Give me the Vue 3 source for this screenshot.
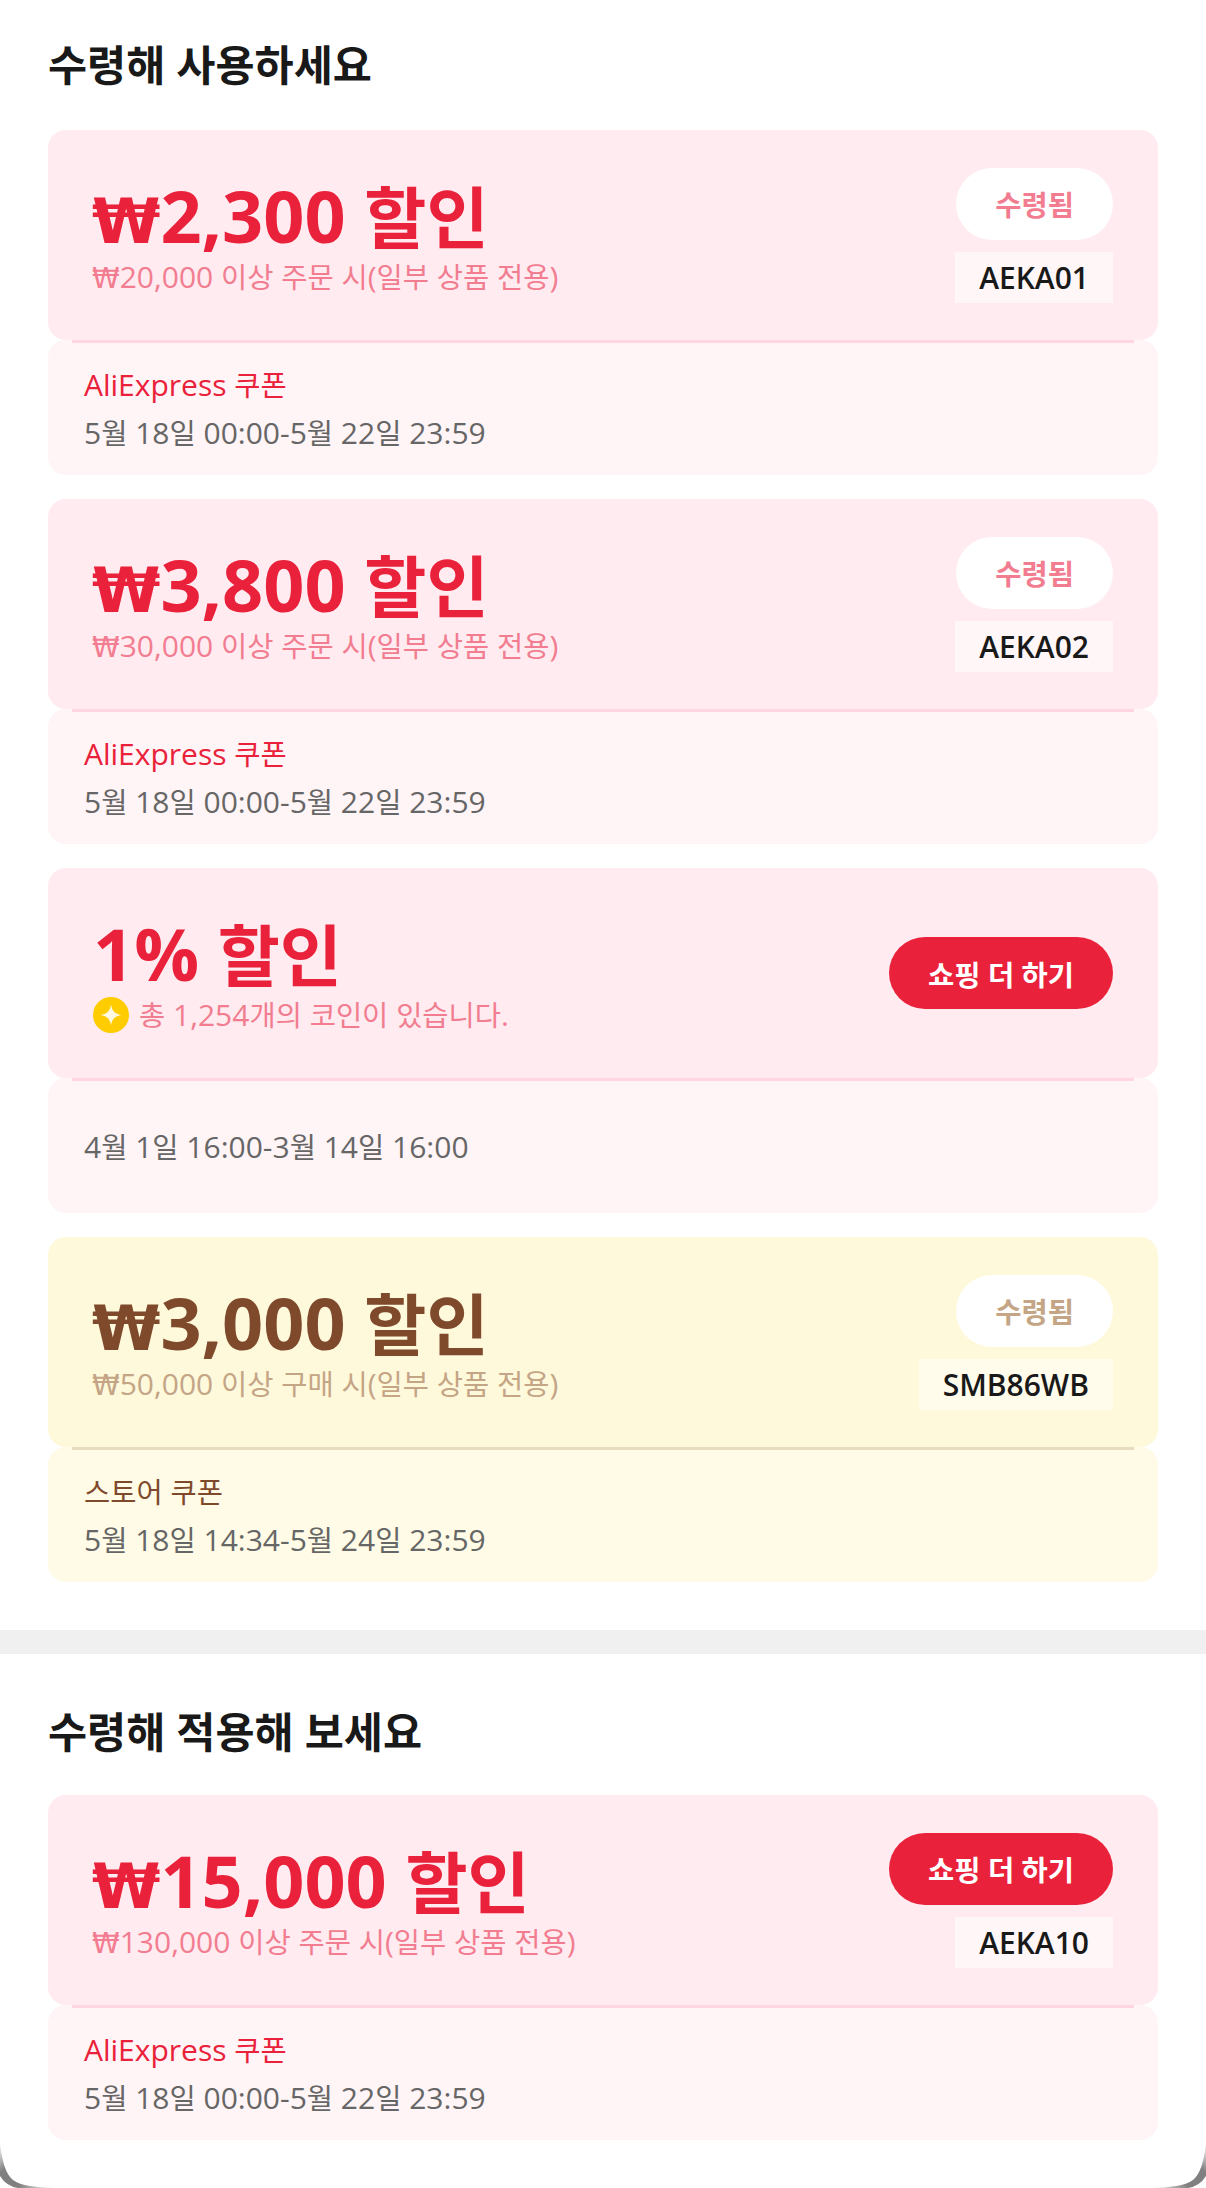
<template>
  <div class="page">
    <section class="panel">
      <h2 class="title">수령해 사용하세요</h2>
      <div class="list">
        <div v-for="c in claimed" :key="c.id" class="coupon" :class="c.theme">
          <div class="top">
            <div class="info">
              <div class="amount">
                <span v-for="(r, i) in runs(c.amount)" :key="i" :class="r.cls">{{ r.text }}</span>
              </div>
              <div class="cond">
                <span v-if="c.coin" class="coin">
                  <svg viewBox="0 0 36 36" width="36" height="36">
                    <circle cx="18" cy="18" r="18" fill="#ffcc00" />
                    <path d="M18 7.5C19 14 22 17 28.5 18C22 19 19 22 18 28.5C17 22 14 19 7.5 18C14 17 17 14 18 7.5Z" fill="#fff8e0" />
                  </svg>
                </span>
                <span>
                  <span v-for="(r, i) in runs(c.cond)" :key="i" :class="r.cls">{{ r.text }}</span>
                </span>
              </div>
            </div>
            <div class="side">
              <button class="btn" :class="{ done: c.done }">{{ c.btn }}</button>
              <div v-if="c.code" class="code">{{ c.code }}</div>
            </div>
          </div>
          <div class="bottom">
            <div v-if="c.source" class="source">
              <span v-for="(r, i) in runs(c.source)" :key="i" :class="r.cls">{{ r.text }}</span>
            </div>
            <div class="date">
              <span v-for="(r, i) in runs(c.date)" :key="i" :class="r.cls">{{ r.text }}</span>
            </div>
          </div>
        </div>
      </div>
    </section>
    <div class="divider"></div>
    <section class="panel second">
      <h2 class="title">수령해 적용해 보세요</h2>
      <div class="list">
        <div v-for="c in apply" :key="c.id" class="coupon" :class="c.theme">
          <div class="top">
            <div class="info">
              <div class="amount">
                <span v-for="(r, i) in runs(c.amount)" :key="i" :class="r.cls">{{ r.text }}</span>
              </div>
              <div class="cond">
                <span>
                  <span v-for="(r, i) in runs(c.cond)" :key="i" :class="r.cls">{{ r.text }}</span>
                </span>
              </div>
            </div>
            <div class="side">
              <button class="btn">{{ c.btn }}</button>
              <div class="code">{{ c.code }}</div>
            </div>
          </div>
          <div class="bottom">
            <div class="source">
              <span v-for="(r, i) in runs(c.source)" :key="i" :class="r.cls">{{ r.text }}</span>
            </div>
            <div class="date">
              <span v-for="(r, i) in runs(c.date)" :key="i" :class="r.cls">{{ r.text }}</span>
            </div>
          </div>
        </div>
      </div>
    </section>

    <!-- rounded screen corners, they sit over the page -->
    <svg v-for="side in ['left', 'right']" :key="side" class="corner" :class="side" viewBox="0 0 60 60" width="60" height="60">
      <defs>
        <linearGradient :id="'fade-' + side" x1="0" y1="0.1" x2="1" y2="1">
          <stop offset="0" stop-color="#808080" stop-opacity="0" />
          <stop offset="0.3" stop-color="#808080" />
          <stop offset="0.6" stop-color="#808080" />
          <stop offset="1" stop-color="#808080" stop-opacity="0" />
        </linearGradient>
      </defs>
      <path d="M0 10C1 33 6 46 13 52C21 58 35 59.5 58 60L18 60Q6 58 0 48Z" :fill="'url(#fade-' + side + ')'" />
    </svg>
  </div>
</template>

<script setup>
const claimed = [
  { id: 1, theme: 'red', amount: '₩2,300 할인', cond: '₩20,000 이상 주문 시(일부 상품 전용)', btn: '수령됨', done: true, code: 'AEKA01', source: 'AliExpress 쿠폰', date: '5월 18일 00:00-5월 22일 23:59' },
  { id: 2, theme: 'red', amount: '₩3,800 할인', cond: '₩30,000 이상 주문 시(일부 상품 전용)', btn: '수령됨', done: true, code: 'AEKA02', source: 'AliExpress 쿠폰', date: '5월 18일 00:00-5월 22일 23:59' },
  { id: 3, theme: 'red', amount: '1% 할인', cond: '총 1,254개의 코인이 있습니다.', coin: true, btn: '쇼핑 더 하기', date: '4월 1일 16:00-3월 14일 16:00' },
  { id: 4, theme: 'yellow', amount: '₩3,000 할인', cond: '₩50,000 이상 구매 시(일부 상품 전용)', btn: '수령됨', done: true, code: 'SMB86WB', source: '스토어 쿠폰', date: '5월 18일 14:34-5월 24일 23:59' }
]

const apply = [
  { id: 5, theme: 'red', amount: '₩15,000 할인', cond: '₩130,000 이상 주문 시(일부 상품 전용)', btn: '쇼핑 더 하기', code: 'AEKA10', source: 'AliExpress 쿠폰', date: '5월 18일 00:00-5월 22일 23:59' }
]

// hangul and the won sign need other sizes than the latin digits next to them
const runs = (text) =>
  text.match(/[가-힣]+|₩|[^가-힣₩]+/g).map((part) => ({
    text: part,
    cls: part === '₩' ? 'won' : /[가-힣]/.test(part) ? 'ko' : ''
  }))
</script>

<style scoped>
.page {
  width: 1206px;
  height: 2188px;
  overflow: hidden;
  background: #fff;
  font-family: "Open Sans", "Noto Sans CJK KR", sans-serif;
  position: relative;
}

.panel {
  padding: 0 48px;
  height: 1630px;
  box-sizing: border-box;
}

.second {
  height: 534px;
}

.divider {
  height: 24px;
  background: #f0f0f0;
}

.title {
  margin: 0;
  height: 130px;
  line-height: 130px;
  font-size: 42.5px;
  font-weight: 700;
  color: #191919;
}

.second .title {
  height: 141px;
  padding-top: 16px;
  box-sizing: border-box;
  line-height: 124px;
}

.list {
  display: flex;
  flex-direction: column;
  gap: 24px;
}

.coupon {
  display: flex;
  flex-direction: column;
}

.top {
  height: 210px;
  box-sizing: border-box;
  border-radius: 18px;
  padding: 0 45px;
  display: flex;
  justify-content: space-between;
  align-items: center;
  position: relative;
}

.top::after {
  content: "";
  position: absolute;
  left: 24px;
  right: 24px;
  bottom: -3px;
  height: 3px;
}

.bottom {
  height: 135px;
  box-sizing: border-box;
  border-radius: 18px;
  padding: 3px 36px 0;
  display: flex;
  flex-direction: column;
  justify-content: center;
  gap: 8px;
}

.ko {
  font-size: 0.95em;
  line-height: 0;
}

.amount {
  font-size: 72px;
  font-weight: 700;
  line-height: 78px;
  margin-bottom: 5px;
  white-space: nowrap;
}

.amount .ko {
  font-size: 67.5px;
}

.won {
  font-family: "DejaVu Sans", sans-serif;
  font-size: 28px;
  line-height: 0;
  margin-left: -1px;
}

.amount .won {
  font-size: 62px;
}

.cond {
  font-size: 30px;
  line-height: 36px;
  display: flex;
  align-items: center;
  white-space: nowrap;
}

.coin {
  width: 36px;
  height: 36px;
  margin-right: 10px;
  display: inline-flex;
}

.side {
  display: flex;
  flex-direction: column;
  align-items: flex-end;
  gap: 12px;
}

.btn {
  height: 72px;
  padding: 0 39px;
  border: none;
  border-radius: 36px;
  font-family: inherit;
  font-size: 28.5px;
  font-weight: 600;
  background: #ea213a;
  color: #fff;
}

.code {
  height: 51px;
  line-height: 51px;
  padding: 0 24px;
  font-size: 30px;
  font-weight: 600;
  color: #191919;
}

.source {
  font-size: 30px;
  line-height: 40px;
}

.date {
  font-size: 30px;
  line-height: 40px;
  color: #666;
}

.corner {
  position: absolute;
  bottom: 0;
}

.corner.left {
  left: 0;
}

.corner.right {
  right: 0;
  transform: scaleX(-1);
}

.red .top { background: #ffebf0; }
.red .top::after { background: #ffd6e2; }
.red .bottom { background: #fff4f6; }
.red .amount, .red .source { color: #ea213a; }
.red .cond { color: #f27d90; }
.red .btn.done { background: #fff; color: #f27d90; }
.red .code { background: #fff6f8; }

.yellow .top { background: #fff9dc; }
.yellow .top::after { background: #e8dcc0; }
.yellow .bottom { background: #fffbe6; }
.yellow .amount, .yellow .source { color: #7f4a2c; }
.yellow .cond { color: #c4a585; }
.yellow .btn.done { background: #fff; color: #c4a585; }
.yellow .code { background: #fffcec; }
</style>
